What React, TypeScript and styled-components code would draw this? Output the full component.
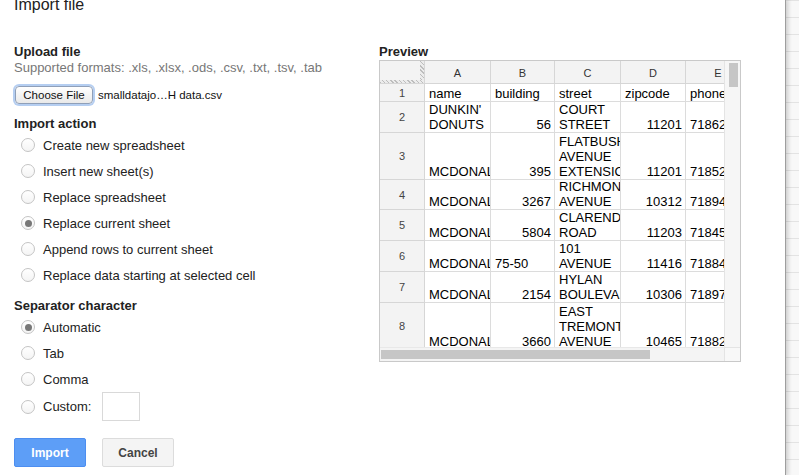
import React from "react";
import styled, { createGlobalStyle } from "styled-components";

const GlobalStyle = createGlobalStyle`
  html, body {
    margin: 0;
    padding: 0;
    background: #ffffff;
    overflow: hidden;
  }
  body {
    font-family: "Liberation Sans", Arial, sans-serif;
    color: #222222;
  }
`;

interface Row {
  num: number;
  height: number;
  cells: string[];
  align: ("left" | "right")[];
}

const L = "left" as const;
const R = "right" as const;

const columns = [
  { label: "A", width: 66 },
  { label: "B", width: 64 },
  { label: "C", width: 66 },
  { label: "D", width: 65 },
  { label: "E", width: 65 },
];

const rows: Row[] = [
  { num: 1, height: 18, cells: ["name", "building", "street", "zipcode", "phone"], align: [L, L, L, L, L] },
  { num: 2, height: 31, cells: ["DUNKIN'\nDONUTS", "56", "COURT\nSTREET", "11201", "71862"], align: [L, R, L, R, L] },
  { num: 3, height: 47, cells: ["MCDONALD'S", "395", "FLATBUSH\nAVENUE\nEXTENSION", "11201", "71852"], align: [L, R, L, R, L] },
  { num: 4, height: 30, cells: ["MCDONALD'S", "3267", "RICHMOND\nAVENUE", "10312", "71894"], align: [L, R, L, R, L] },
  { num: 5, height: 31, cells: ["MCDONALD'S", "5804", "CLARENDON\nROAD", "11203", "71845"], align: [L, R, L, R, L] },
  { num: 6, height: 31, cells: ["MCDONALD'S", "75-50", "101\nAVENUE", "11416", "71884"], align: [L, L, L, R, L] },
  { num: 7, height: 31, cells: ["MCDONALD'S", "2154", "HYLAN\nBOULEVARD", "10306", "71897"], align: [L, R, L, R, L] },
  { num: 8, height: 47, cells: ["MCDONALD'S", "3660", "EAST\nTREMONT\nAVENUE", "10465", "71882"], align: [L, R, L, R, L] },
];

const importActions = [
  { label: "Create new spreadsheet", checked: false },
  { label: "Insert new sheet(s)", checked: false },
  { label: "Replace spreadsheet", checked: false },
  { label: "Replace current sheet", checked: true },
  { label: "Append rows to current sheet", checked: false },
  { label: "Replace data starting at selected cell", checked: false },
];

const separators = [
  { label: "Automatic", checked: true },
  { label: "Tab", checked: false },
  { label: "Comma", checked: false },
];

export default function App() {
  const gridColumns = `45px ${columns.map((c) => c.width + "px").join(" ")}`;

  return (
    <>
      <GlobalStyle />
      <Page>
        <Dialog>
          <Title>Import file</Title>
          <Columns>
            <LeftCol>
              <SectionLabel>Upload file</SectionLabel>
              <Hint>Supported formats: .xls, .xlsx, .ods, .csv, .txt, .tsv, .tab</Hint>
              <FileRow>
                <ChooseButton>Choose File</ChooseButton>
                <FileName>smalldatajo…H data.csv</FileName>
              </FileRow>

              <SectionLabel $top={12}>Import action</SectionLabel>
              {importActions.map((a) => (
                <RadioRow key={a.label}>
                  <Radio $checked={a.checked} />
                  <RadioLabel>{a.label}</RadioLabel>
                </RadioRow>
              ))}

              <SectionLabel $top={10}>Separator character</SectionLabel>
              {separators.map((s) => (
                <RadioRow key={s.label}>
                  <Radio $checked={s.checked} />
                  <RadioLabel>{s.label}</RadioLabel>
                </RadioRow>
              ))}
              <RadioRow $height={29}>
                <Radio $checked={false} />
                <RadioLabel>Custom:</RadioLabel>
                <CustomInput />
              </RadioRow>

              <ButtonRow>
                <PrimaryButton>Import</PrimaryButton>
                <SecondaryButton>Cancel</SecondaryButton>
              </ButtonRow>
            </LeftCol>

            <PreviewCol>
              <SectionLabel>Preview</SectionLabel>
              <SheetBox>
                <SheetMain>
                  <GridViewport>
                    <Grid style={{ gridTemplateColumns: gridColumns }}>
                      <Corner />
                      {columns.map((c) => (
                        <ColHeader key={c.label}>{c.label}</ColHeader>
                      ))}
                      {rows.map((r) => (
                        <React.Fragment key={r.num}>
                          <RowHeader style={{ height: r.height }}>{r.num}</RowHeader>
                          {r.cells.map((text, i) => (
                            <Cell key={i} $align={r.align[i]} style={{ height: r.height }}>
                              {text}
                            </Cell>
                          ))}
                        </React.Fragment>
                      ))}
                    </Grid>
                  </GridViewport>
                  <VScroll>
                    <VThumb />
                  </VScroll>
                </SheetMain>
                <HScrollRow>
                  <HScroll>
                    <HThumb />
                  </HScroll>
                  <ScrollCorner />
                </HScrollRow>
              </SheetBox>
            </PreviewCol>
          </Columns>
        </Dialog>
        <Backdrop />
      </Page>
    </>
  );
}

const Page = styled.div`
  display: flex;
  width: 799px;
  height: 475px;
  overflow: hidden;
`;

const Dialog = styled.div`
  width: 786px;
  height: 475px;
  border-right: 1px solid #9e9e9e;
  background: #ffffff;
  box-shadow: 2px 0 4px rgba(0, 0, 0, 0.12);
  position: relative;
  z-index: 1;
  display: flex;
  flex-direction: column;
  padding-left: 14px;
  box-sizing: border-box;
`;

const Backdrop = styled.div`
  flex: 1;
  background:
    linear-gradient(to right, rgba(0, 0, 0, 0.05), rgba(0, 0, 0, 0) 6px),
    repeating-linear-gradient(to bottom, #e3e3e3 0 1px, #f8f8f8 1px 17px);
`;

const Title = styled.div`
  font-size: 16px;
  line-height: 16px;
  margin-top: -3px;
  color: #222222;
`;

const Columns = styled.div`
  display: flex;
  margin-top: 31px;
`;

const LeftCol = styled.div`
  width: 365px;
  display: flex;
  flex-direction: column;
`;

const PreviewCol = styled.div`
  width: 362px;
  display: flex;
  flex-direction: column;
`;

const SectionLabel = styled.div<{ $top?: number }>`
  font-size: 13px;
  line-height: 16px;
  font-weight: bold;
  color: #222222;
  margin-top: ${(p) => p.$top ?? 0}px;
`;

const Hint = styled.div`
  font-size: 13px;
  line-height: 16px;
  color: #777777;
`;

const FileRow = styled.div`
  display: flex;
  align-items: center;
  gap: 5px;
  margin-top: 10px;
  height: 18px;
  padding-left: 1px;
`;

const ChooseButton = styled.button`
  width: 78px;
  height: 18px;
  padding: 0;
  font-family: "Liberation Sans", Arial, sans-serif;
  font-size: 11.5px;
  color: #111111;
  background: linear-gradient(#ffffff, #e9e9e9);
  border: 1px solid #8f9fb8;
  border-radius: 4px;
  box-shadow: 0 0 0 2px rgba(120, 165, 230, 0.55);
`;

const FileName = styled.span`
  font-size: 11.5px;
  color: #111111;
`;

const RadioRow = styled.div<{ $height?: number }>`
  display: flex;
  align-items: center;
  height: ${(p) => p.$height ?? 26}px;
  padding-left: 7px;
`;

const Radio = styled.span<{ $checked: boolean }>`
  width: 14px;
  height: 14px;
  box-sizing: border-box;
  border-radius: 50%;
  border: 1px solid #c4c4c4;
  background: linear-gradient(#ffffff, #f4f4f4);
  display: flex;
  align-items: center;
  justify-content: center;
  margin-right: 8px;
  flex-shrink: 0;

  &::after {
    content: "";
    width: 7px;
    height: 7px;
    border-radius: 50%;
    background: #777777;
    display: ${(p) => (p.$checked ? "block" : "none")};
  }
`;

const RadioLabel = styled.span`
  font-size: 13px;
  color: #222222;
`;

const CustomInput = styled.div`
  width: 38px;
  height: 29px;
  box-sizing: border-box;
  border: 1px solid #d9d9d9;
  margin-left: 11px;
  background: #ffffff;
`;

const ButtonRow = styled.div`
  display: flex;
  gap: 16px;
  margin-top: 17px;
`;

const BaseButton = styled.button`
  width: 72px;
  height: 29px;
  box-sizing: border-box;
  border-radius: 2px;
  font-family: "Liberation Sans", Arial, sans-serif;
  font-size: 12px;
  font-weight: bold;
  padding: 0;
`;

const PrimaryButton = styled(BaseButton)`
  background: #5d9ef7;
  border: 1px solid #4d8ef0;
  color: #ffffff;
`;

const SecondaryButton = styled(BaseButton)`
  background: #f4f4f4;
  border: 1px solid #dcdcdc;
  color: #444444;
`;

const SheetBox = styled.div`
  width: 362px;
  height: 302px;
  box-sizing: border-box;
  border: 1px solid #c9c9c9;
  display: flex;
  flex-direction: column;
  font-family: "Liberation Sans", Arial, sans-serif;
`;

const SheetMain = styled.div`
  display: flex;
  height: 286px;
`;

const GridViewport = styled.div`
  width: 344px;
  height: 286px;
  overflow: hidden;
`;

const Grid = styled.div`
  display: grid;
  width: max-content;
`;

const HeaderCell = styled.div`
  background: #f3f3f3;
  border-right: 1px solid #d6d6d6;
  border-bottom: 1px solid #d6d6d6;
  box-sizing: border-box;
  font-size: 11px;
  color: #333333;
  display: flex;
  align-items: center;
  justify-content: center;
`;

const Corner = styled(HeaderCell)`
  height: 23px;
  position: relative;

  &::before {
    content: "";
    position: absolute;
    right: 0;
    top: 0;
    bottom: 0;
    width: 4px;
    background: repeating-linear-gradient(45deg, #bdbdbd 0 1px, #ececec 1px 3px);
  }

  &::after {
    content: "";
    position: absolute;
    left: 0;
    right: 0;
    bottom: 0;
    height: 3px;
    background: repeating-linear-gradient(45deg, #bdbdbd 0 1px, #ececec 1px 3px);
  }
`;

const ColHeader = styled(HeaderCell)`
  height: 23px;
  padding-top: 1px;
`;

const RowHeader = styled(HeaderCell)`
  color: #444444;
`;

const Cell = styled.div<{ $align: "left" | "right" }>`
  box-sizing: border-box;
  border-right: 1px solid #dcdcdc;
  border-bottom: 1px solid #dcdcdc;
  overflow: hidden;
  white-space: pre;
  font-size: 13px;
  line-height: 15px;
  color: #000000;
  display: flex;
  flex-direction: column;
  justify-content: flex-end;
  text-align: ${(p) => p.$align};
  padding: 0 3px 0 4px;
`;

const VScroll = styled.div`
  width: 16px;
  height: 286px;
  box-sizing: border-box;
  background: #f6f6f6;
  border-left: 1px solid #e4e4e4;
  padding: 2px 2px 0 4px;
`;

const VThumb = styled.div`
  width: 9px;
  height: 24px;
  background: #c6c6c6;
`;

const HScrollRow = styled.div`
  display: flex;
  height: 14px;
`;

const HScroll = styled.div`
  width: 344px;
  height: 14px;
  box-sizing: border-box;
  background: #f4f4f4;
  border-top: 1px solid #e8e8e8;
  padding: 2px 0 0 1px;
`;

const HThumb = styled.div`
  width: 269px;
  height: 9px;
  background: #c6c6c6;
`;

const ScrollCorner = styled.div`
  flex: 1;
  box-sizing: border-box;
  border-left: 1px solid #e4e4e4;
  border-top: 1px solid #e4e4e4;
  background: #f8f8f8;
`;
